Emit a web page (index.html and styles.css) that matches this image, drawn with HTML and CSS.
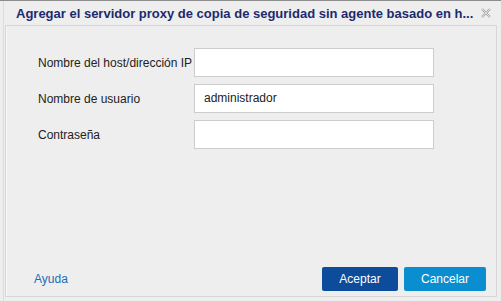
FILE: index.html
```html
<!DOCTYPE html>
<html lang="es">
<head>
<meta charset="utf-8">
<title>Proxy</title>
<link rel="stylesheet" href="styles.css">
</head>
<body>
<div class="dialog">
  <div class="header">
    <span class="title">Agregar el servidor proxy de copia de seguridad sin agente basado en h...</span>
    <svg class="close" width="10" height="10" viewBox="0 0 10 10">
      <path d="M1 1 L9 9 M9 1 L1 9" stroke="#a8a8a8" stroke-width="2.2" fill="none"/>
      <path d="M1 1 L9 9 M9 1 L1 9" stroke="#eeeeee" stroke-width="0.8" fill="none"/>
    </svg>
  </div>
  <div class="panel">
    <div class="form">
      <div class="row">
        <label class="label">Nombre del host/dirección IP</label>
        <div class="input"></div>
      </div>
      <div class="row">
        <label class="label">Nombre de usuario</label>
        <div class="input">administrador</div>
      </div>
      <div class="row">
        <label class="label">Contraseña</label>
        <div class="input"></div>
      </div>
    </div>
    <div class="footer">
      <a class="help">Ayuda</a>
      <div class="buttons">
        <button class="btn primary">Aceptar</button>
        <button class="btn secondary">Cancelar</button>
      </div>
    </div>
  </div>
</div>
</body>
</html>
```
FILE: styles.css
```css
html, body {
  margin: 0;
  padding: 0;
  background: #eeeeee;
}
body {
  font-family: "Liberation Sans", Arial, sans-serif;
}
.dialog {
  box-sizing: border-box;
  width: 501px;
  height: 301px;
  border-top: 1px solid #8c8c8c;
  padding: 0 4px 4px 5px;
  display: flex;
  flex-direction: column;
  background: #eeeeee;
  box-shadow: inset 3px 0 0 #eeeeee, inset 4px 0 0 #dcdcdc;
}
.header {
  height: 24px;
  display: flex;
  align-items: center;
  padding-left: 11px;
  padding-right: 6px;
}
.title {
  flex: 1;
  font-size: 13px;
  font-weight: bold;
  color: #1c2a70;
  white-space: nowrap;
  overflow: hidden;
}
.close {
  display: block;
}
.panel {
  flex: 1;
  border: 1px solid #d6d6d6;
  display: flex;
  flex-direction: column;
  box-shadow: inset 1px 0 0 #f8f8f8;
}
.form {
  padding: 22px 0 0 32px;
  display: flex;
  flex-direction: column;
  gap: 7px;
}
.row {
  display: flex;
  align-items: center;
}
.label {
  width: 156px;
  font-size: 12px;
  color: #222222;
  white-space: nowrap;
}
.input {
  box-sizing: border-box;
  width: 240px;
  height: 29px;
  background: #ffffff;
  border: 1px solid #cccccc;
  padding: 0 9px;
  font-size: 12px;
  color: #222222;
  line-height: 27px;
}
.footer {
  margin-top: auto;
  display: flex;
  align-items: center;
  justify-content: space-between;
  padding: 0 10px 5px 28px;
}
.help {
  font-size: 12px;
  color: #1a6fb8;
}
.buttons {
  display: flex;
  gap: 6px;
}
.btn {
  height: 24px;
  border: none;
  border-radius: 2px;
  color: #ffffff;
  font-family: "Liberation Sans", Arial, sans-serif;
  font-size: 12px;
  padding: 0;
}
.primary {
  width: 76px;
  background: #0d4b9b;
}
.secondary {
  width: 82px;
  background: #0a8ed0;
}
```
